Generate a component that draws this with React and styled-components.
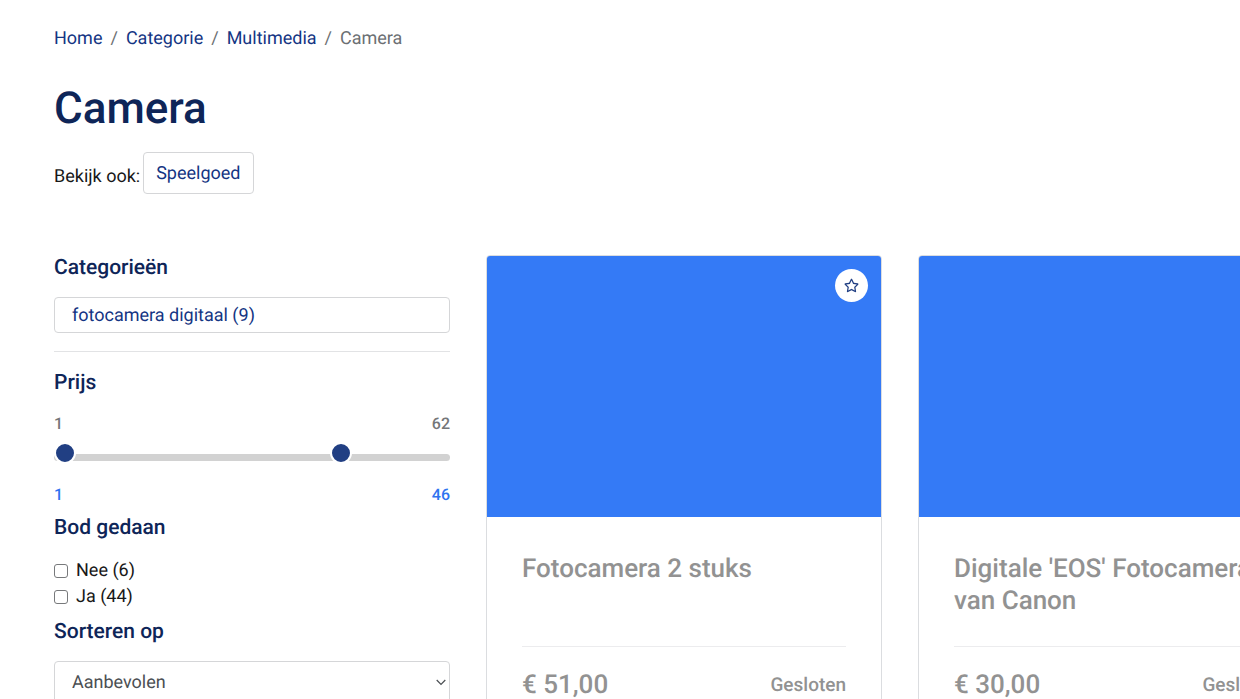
import React, { useState } from "react";
import styled, { createGlobalStyle } from "styled-components";
import { FaRegStar } from "react-icons/fa";

const GlobalStyle = createGlobalStyle`
  *, *::before, *::after { box-sizing: border-box; }
  body {
    margin: 0;
    background: #fff;
    color: #181818;
    font-family: Roboto, "Liberation Sans", sans-serif;
    font-size: 18px;
    line-height: 27px;
    text-rendering: geometricPrecision;
  }
  input, select, button { font: inherit; text-rendering: inherit; }
`;

const Page = styled.div`
  padding: 25px 54px 54px;
  overflow-x: clip;
`;

const TextLink = styled.a`
  color: #143583;
  text-decoration: none;
`;

const Breadcrumb = styled.ol`
  display: flex;
  margin: 0;
  padding: 0;
  list-style: none;
`;

const Crumb = styled.li`
  color: #6c6f73;
  & + &::before {
    content: "/";
    padding: 0 8px;
  }
`;

const PageTitle = styled.h1`
  margin: 29px 0 17px;
  color: #0e2558;
  font-size: 44px;
  line-height: 54px;
  font-weight: 500;
`;

const Related = styled.div`
  display: flex;
  align-items: center;
  gap: 3px;
`;

const RelatedLabel = styled.span`
  padding-top: 6px;
`;

const RelatedLink = styled(TextLink)`
  padding: 7px 12px 6px;
  border: 1px solid #d5d6d8;
  border-radius: 4px;
`;

const Columns = styled.div`
  display: grid;
  grid-template-columns: repeat(3, minmax(396px, 1fr));
  gap: 36px;
  margin-top: 61px;
`;

const Filters = styled.form`
  display: flex;
  flex-direction: column;
`;

const FilterTitle = styled.h2`
  margin: 0;
  color: #0e2558;
  font-size: 21px;
  line-height: 26px;
  font-weight: 500;
`;

const CategoryBox = styled.div`
  margin-top: 16px;
  padding: 4px 17px 3px;
  border: 1px solid #d5d6d8;
  border-radius: 4px;
`;

const Divider = styled.hr`
  width: 100%;
  height: 1px;
  margin: ${(p) => p.$space} 0;
  border: 0;
  background: ${(p) => p.$color};
`;

const RangeLabels = styled.div`
  display: flex;
  justify-content: space-between;
  color: ${(p) => (p.$active ? "#2f74f0" : "#757779")};
  font-size: 16px;
  line-height: 24px;
  font-weight: 500;
`;

const RangeTrack = styled.div`
  position: relative;
  height: 7px;
  margin: 18px 0 22px;
  border-radius: 4px;
  background: #d2d2d2;
`;

const RangeInput = styled.input`
  position: absolute;
  top: -12px;
  left: 0;
  width: 100%;
  height: 22px;
  margin: 0;
  appearance: none;
  background: transparent;
  pointer-events: none;
  &::-webkit-slider-thumb {
    appearance: none;
    width: 22px;
    height: 22px;
    border: 2px solid #fff;
    border-radius: 50%;
    background: #213f83;
    pointer-events: auto;
  }
`;

const PriceRange = styled.div`
  margin: 16px 0 8px;
`;

const CheckRow = styled.label`
  display: flex;
  align-items: center;
  gap: 8px;
  line-height: 26px;
`;

const CheckGroup = styled.div`
  margin: 17px 0 9px;
`;

const CheckInput = styled.input`
  width: 14px;
  height: 14px;
  margin: 0;
  appearance: none;
  border: 1px solid #77797b;
  border-radius: 3px;
  background: #fff;
  &:checked { background: #213f83; }
`;

const SelectWrap = styled.div`
  position: relative;
  margin-top: 16px;
`;

const SortSelect = styled.select`
  width: 100%;
  height: 42px;
  padding: 0 36px 0 17px;
  appearance: none;
  border: 1px solid #d5d6d8;
  border-radius: 4px;
  background: #fff;
  color: #4b4f53;
`;

const SelectArrow = styled.svg`
  position: absolute;
  top: 18px;
  right: 4px;
  pointer-events: none;
`;

const Card = styled.article`
  position: relative;
  min-height: 540px;
  border: 1px solid #dbdde0;
  border-radius: 4px;
`;

const CardImage = styled.div`
  height: 261px;
  border-radius: 3px 3px 0 0;
  background: #347af6;
`;

const FavoriteButton = styled.button`
  position: absolute;
  top: 13px;
  right: 13px;
  display: grid;
  place-items: center;
  width: 33px;
  height: 33px;
  padding: 0;
  border: 0;
  border-radius: 50%;
  background: #fff;
  color: #213f83;
`;

const CardBody = styled.div`
  padding: 36px 35px;
`;

const CardTitle = styled.h3`
  min-height: 64px;
  margin: 0;
  color: #929292;
  font-size: 26px;
  line-height: 32px;
  font-weight: 500;
`;

const CardFooter = styled.div`
  display: flex;
  align-items: center;
  justify-content: space-between;
  color: #929292;
  font-weight: 500;
`;

const Price = styled.span`
  font-size: 26px;
  line-height: 32px;
`;

const Status = styled.span`
  font-size: 19px;
  line-height: 32px;
`;

const trail = ["Home", "Categorie", "Multimedia"];

const bidFilters = ["Nee (6)", "Ja (44)"];

const lots = [
  { title: "Fotocamera 2 stuks", price: "€ 51,00" },
  { title: "Digitale 'EOS' Fotocamera van Canon", price: "€ 30,00" },
];

function LotCard({ title, price }) {
  return (
    <Card>
      <CardImage />
      <FavoriteButton type="button" aria-label="Favoriet">
        <FaRegStar size={15} />
      </FavoriteButton>
      <CardBody>
        <CardTitle>{title}</CardTitle>
        <Divider $space="29px 0 22px" $color="#ececee" />
        <CardFooter>
          <Price>{price}</Price>
          <Status>Gesloten</Status>
        </CardFooter>
      </CardBody>
    </Card>
  );
}

export default function App() {
  const [low, setLow] = useState(1);
  const [high, setHigh] = useState(46);

  return (
    <>
      <GlobalStyle />
      <Page>
        <nav aria-label="Kruimelpad">
          <Breadcrumb>
            {trail.map((name) => (
              <Crumb key={name}>
                <TextLink href="#">{name}</TextLink>
              </Crumb>
            ))}
            <Crumb aria-current="page">Camera</Crumb>
          </Breadcrumb>
        </nav>
        <PageTitle>Camera</PageTitle>
        <Related>
          <RelatedLabel>Bekijk ook:</RelatedLabel>
          <RelatedLink href="#">Speelgoed</RelatedLink>
        </Related>
        <Columns>
          <Filters>
            <FilterTitle>Categorieën</FilterTitle>
            <CategoryBox>
              <TextLink href="#">fotocamera digitaal (9)</TextLink>
            </CategoryBox>
            <Divider $space="18px" $color="#e2e3e5" />
            <FilterTitle>Prijs</FilterTitle>
            <PriceRange>
              <RangeLabels>
                <span>1</span>
                <span>62</span>
              </RangeLabels>
              <RangeTrack>
                <RangeInput
                  type="range"
                  min="1"
                  max="62"
                  value={low}
                  aria-label="Minimumprijs"
                  onChange={(e) => setLow(Math.min(Number(e.target.value), high))}
                />
                <RangeInput
                  type="range"
                  min="1"
                  max="62"
                  value={high}
                  aria-label="Maximumprijs"
                  onChange={(e) => setHigh(Math.max(Number(e.target.value), low))}
                />
              </RangeTrack>
              <RangeLabels $active>
                <span>{low}</span>
                <span>{high}</span>
              </RangeLabels>
            </PriceRange>
            <FilterTitle>Bod gedaan</FilterTitle>
            <CheckGroup>
              {bidFilters.map((name) => (
                <CheckRow key={name}>
                  <CheckInput type="checkbox" />
                  {name}
                </CheckRow>
              ))}
            </CheckGroup>
            <FilterTitle as="label" htmlFor="sort">Sorteren op</FilterTitle>
            <SelectWrap>
              <SortSelect id="sort">
                <option>Aanbevolen</option>
              </SortSelect>
              <SelectArrow width="10" height="7" viewBox="0 0 10 7" fill="none" stroke="#4b4f53" strokeWidth="1.2">
                <path d="M0.7 1 5 5.5 9.3 1" />
              </SelectArrow>
            </SelectWrap>
          </Filters>
          {lots.map((lot) => (
            <LotCard key={lot.title} {...lot} />
          ))}
        </Columns>
      </Page>
    </>
  );
}
